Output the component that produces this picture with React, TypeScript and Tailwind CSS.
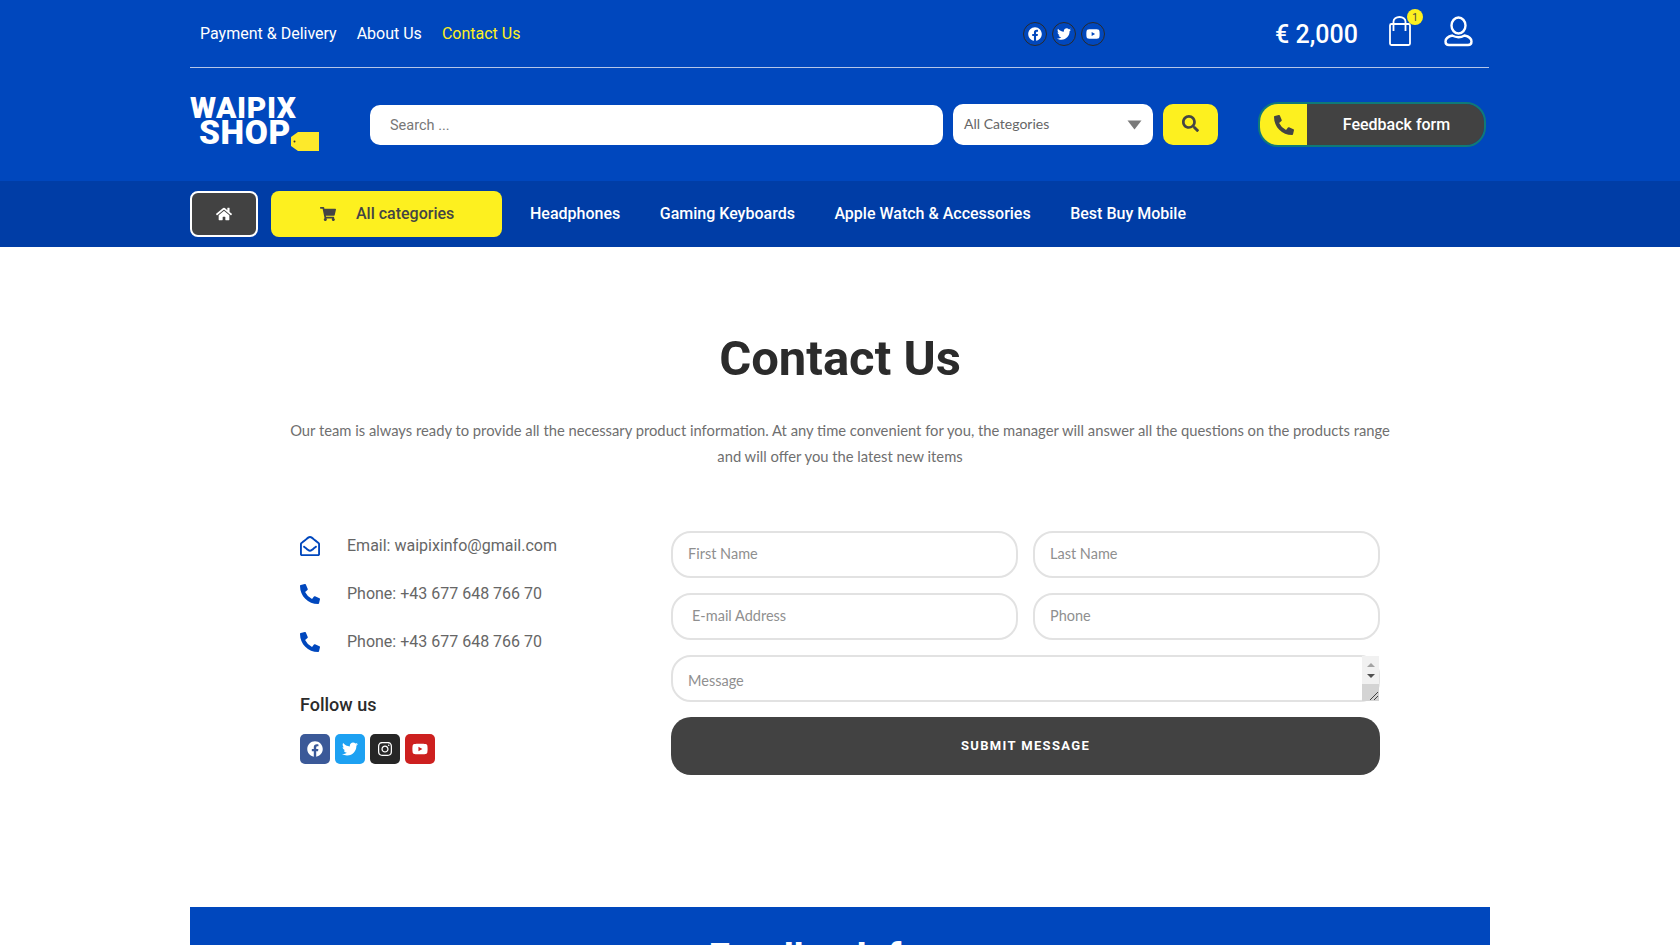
import { FaFacebook, FaHome, FaInstagram, FaPhoneAlt, FaRegEnvelopeOpen, FaSearch, FaShoppingCart, FaTwitter, FaYoutube } from "react-icons/fa";

const roboto = "font-['Roboto',sans-serif]";
const body = "font-['Lato',sans-serif]";

function Logo() {
  return (
    <div className="relative w-[130px] h-[60px] shrink-0 font-['Roboto',sans-serif] font-black text-white leading-none">
      <div className="text-[30px] tracking-[0.6px] leading-[25px]">WAIPIX</div>
      <div className="text-[33.5px] pl-[9px] leading-[25px] tracking-[0.6px]">SHOP</div>
      <svg className="absolute left-[101px] top-[37px]" width="28" height="19" viewBox="0 0 28 19">
        <path d="M7 0H28V19H7L0 14V5Z" fill="#FDE92B" />
        <circle cx="3.5" cy="9.500" r="1" fill="#333" />
      </svg>
    </div>
  );
}

function TopSocial({ children }: { children: React.ReactNode }) {
  return (
    <div className="w-6 h-6 rounded-full border border-[#2a2a2a] flex items-center justify-center text-white text-[14px]">
      {children}
    </div>
  );
}

function Header() {
  return (
    <header className="bg-[#0047BD] h-[181px]">
      <div className="w-[1300px] mx-auto">
        <div className="h-[68px] mr-[1px] border-b border-[#b5c6e8] flex items-center pl-[10px] relative">
          <nav className={`flex gap-[20px] text-[16px] text-white ${roboto}`}>
            <span>Payment &amp; Delivery</span>
            <span>About Us</span>
            <span className="text-[#FDF01F]">Contact Us</span>
          </nav>
          <div className="absolute left-[833px] top-[22px] flex gap-[5px]">
            <TopSocial><FaFacebook /></TopSocial>
            <TopSocial><FaTwitter /></TopSocial>
            <TopSocial><FaYoutube /></TopSocial>
          </div>
          <div className={`absolute left-[1085px] top-[19px] text-[25px] leading-[32px] font-medium text-white ${roboto}`}>€ 2,000</div>
          <svg className="absolute left-[1198px] top-[15px]" width="24" height="31" viewBox="0 0 24 31" fill="none" stroke="white" strokeWidth="1.8">
            <rect x="2" y="9" width="20" height="21" rx="1.5" />
            <path d="M5.500 16V6.500a6 4.500 0 0 1 12 0V16" />
          </svg>
          <div className={`absolute left-[1217px] top-[9px] w-4 h-4 rounded-full bg-[#FDF01F] text-[#444] text-[10px] flex items-center justify-center ${roboto}`}>1</div>
          <svg className="absolute left-[1254px] top-[15px]" width="29" height="32" viewBox="0 0 29 32" fill="none" stroke="white" strokeWidth="2.4">
            <ellipse cx="14.5" cy="10.5" rx="7" ry="8" />
            <path d="M8.500 20.500C4 21.500 1.500 23.500 1.500 26.500c0 2.500 1.500 3.500 3.500 3.500h19c2 0 3.500-1 3.500-3.500 0-3-2.500-5-7-6-3.500 2-8.500 2-12.500 0Z" />
          </svg>
        </div>
        <div className="flex items-start pt-[34px]">
          <div className="-mt-[7px]"><Logo /></div>
          <div className="ml-[50px] mt-[3px] w-[573px] h-10 bg-white rounded-[10px] flex items-center pl-5 pt-[2px]">
            <input className={`w-full outline-none text-[14.5px] text-[#555] placeholder:text-[#777] ${roboto}`} placeholder="Search ..." />
          </div>
          <div className={`ml-[10px] mt-[2px] w-[200px] h-[41px] bg-white rounded-[10px] flex items-center justify-between pl-[11px] pr-[11px] pb-[2px] text-[14px] text-[#666] ${body}`}>
            <span>All Categories</span>
            <svg className="mt-[2px]" width="15" height="10" viewBox="0 0 15 10">
              <path d="M0.500 0.500H14.500L7.500 9.500Z" fill="#7a7a7a" />
            </svg>
          </div>
          <div className="ml-[10px] mt-[2px] w-[55px] h-[41px] bg-[#FDF01F] rounded-[10px] flex items-center justify-center pb-[2px] text-[#444] text-[17px]">
            <FaSearch />
          </div>
          <div className="ml-[40px] w-[228px] h-[45px] rounded-[20px] border-2 border-[#0f7a78] overflow-hidden flex">
            <div className="w-[47px] bg-[#FDF01F] flex items-center justify-center text-[#444] text-[20px]">
              <FaPhoneAlt />
            </div>
            <div className={`flex-1 bg-[#424242] text-white text-[16px] font-medium flex items-center justify-center pl-[2px] ${roboto}`}>Feedback form</div>
          </div>
        </div>
      </div>
    </header>
  );
}

function NavBar() {
  return (
    <div className="bg-[#003DA6] h-[66px]">
      <div className={`w-[1300px] mx-auto flex items-center h-full text-[16px] font-medium text-white ${roboto}`}>
        <div className="w-[68px] h-[46px] rounded-[8px] border-2 border-white bg-[#424242] flex items-center justify-center text-[16px]">
          <FaHome />
        </div>
        <div className="ml-[13px] w-[231px] h-[46px] rounded-[8px] bg-[#FDF01F] text-[#444] flex items-center pl-[49px]">
          <FaShoppingCart className="text-[16px]" />
          <span className="ml-[20px]">All categories</span>
        </div>
        <div className="ml-[28px] flex gap-[39.5px]">
          <span>Headphones</span>
          <span>Gaming Keyboards</span>
          <span>Apple Watch &amp; Accessories</span>
          <span>Best Buy Mobile</span>
        </div>
      </div>
    </div>
  );
}

function ContactInfo() {
  return (
    <div className={`w-[481px] pl-[110px] shrink-0 ${roboto}`}>
      <div className="flex flex-col gap-[28px] text-[16px] leading-[20px] text-[#666] pt-[5px]">
        <div className="flex items-center"><FaRegEnvelopeOpen className="text-[#0047BD] text-[20px] w-5" /><span className="ml-[27px]">Email: waipixinfo@gmail.com</span></div>
        <div className="flex items-center"><FaPhoneAlt className="text-[#0047BD] text-[20px] w-5" /><span className="ml-[27px]">Phone: +43 677 648 766 70</span></div>
        <div className="flex items-center"><FaPhoneAlt className="text-[#0047BD] text-[20px] w-5" /><span className="ml-[27px]">Phone: +43 677 648 766 70</span></div>
      </div>
      <div className="mt-[41px] text-[18px] leading-[24px] font-medium text-[#2b2b2b]">Follow us</div>
      <div className="mt-[17px] flex gap-[5px] text-white text-[16px]">
        <div className="w-[30px] h-[30px] rounded-[5px] bg-[#3b5998] flex items-center justify-center"><FaFacebook /></div>
        <div className="w-[30px] h-[30px] rounded-[5px] bg-[#1da1f2] flex items-center justify-center"><FaTwitter /></div>
        <div className="w-[30px] h-[30px] rounded-[5px] bg-[#262626] flex items-center justify-center"><FaInstagram /></div>
        <div className="w-[30px] h-[30px] rounded-[5px] bg-[#cd201f] flex items-center justify-center"><FaYoutube /></div>
      </div>
    </div>
  );
}

function ContactForm() {
  const field = `w-full h-[47px] rounded-[20px] border-2 border-[#e2e2e2] bg-white px-[15px] pb-[3px] text-[14.5px] outline-none placeholder:text-[#8f8f8f] ${body}`;
  return (
    <form className="w-[709px] grid grid-cols-2 gap-x-[15px] gap-y-[15px]">
      <input className={field} placeholder="First Name" />
      <input className={field} placeholder="Last Name" />
      <input className={`${field} pl-[19px]`} placeholder="E-mail Address" />
      <input className={field} placeholder="Phone" />
      <div className="col-span-2 relative h-[47px]">
        <textarea
          className={`block w-full h-full rounded-[20px] border-2 border-[#e2e2e2] bg-white px-[15px] pt-[13px] text-[14.5px] outline-none overflow-hidden resize-none placeholder:text-[#8f8f8f] ${body}`}
          placeholder="Message"
        />
        {/* scrollbar and resize grip */}
        <div className="absolute right-[1px] top-[1px] bottom-[1px] w-[17px] bg-[#f1f1f1] flex flex-col pointer-events-none">
          <div className="h-[28px] flex flex-col items-center justify-center gap-[7px]">
            <div className="w-0 h-0 border-x-[4px] border-x-transparent border-b-[4px] border-b-[#a3a3a3]" />
            <div className="w-0 h-0 border-x-[4px] border-x-transparent border-t-[4px] border-t-[#505050]" />
          </div>
          <div className="flex-1 bg-[#d4d4d4] flex items-end justify-end">
            <svg width="10" height="10" viewBox="0 0 10 10" stroke="#444" strokeWidth="1">
              <path d="M1 9 9 1M5 9 9 5" />
            </svg>
          </div>
        </div>
      </div>
      <button type="button" className={`col-span-2 h-[58px] rounded-[20px] bg-[#424242] text-white text-[13px] font-bold tracking-[1.35px] ${roboto}`}>
        SUBMIT MESSAGE
      </button>
    </form>
  );
}

export default function App() {
  return (
    <div className="h-[945px] overflow-hidden bg-white">
      <Header />
      <NavBar />
      <main>
        <h1 className={`mt-[83px] text-center text-[49px] leading-[58px] font-bold text-[#2b2b2b] ${roboto}`}>Contact Us</h1>
        <p className={`mt-[29px] text-center text-[14.75px] leading-[26px] text-[#6f6f6f] ${body}`}>
          Our team is always ready to provide all the necessary product information. At any time convenient for you, the manager will answer all the questions on the products range
          <br />
          and will offer you the latest new items
        </p>
        <div className="mt-[62px] w-[1300px] mx-auto flex">
          <ContactInfo />
          <ContactForm />
        </div>
        <section className="mt-[132px] w-[1300px] mx-auto bg-[#0047BD] h-[120px] pt-[27px]">
          <h2 className={`text-center text-[39px] font-bold text-white leading-[48px] ${roboto}`}>Feedback form</h2>
        </section>
      </main>
    </div>
  );
}
